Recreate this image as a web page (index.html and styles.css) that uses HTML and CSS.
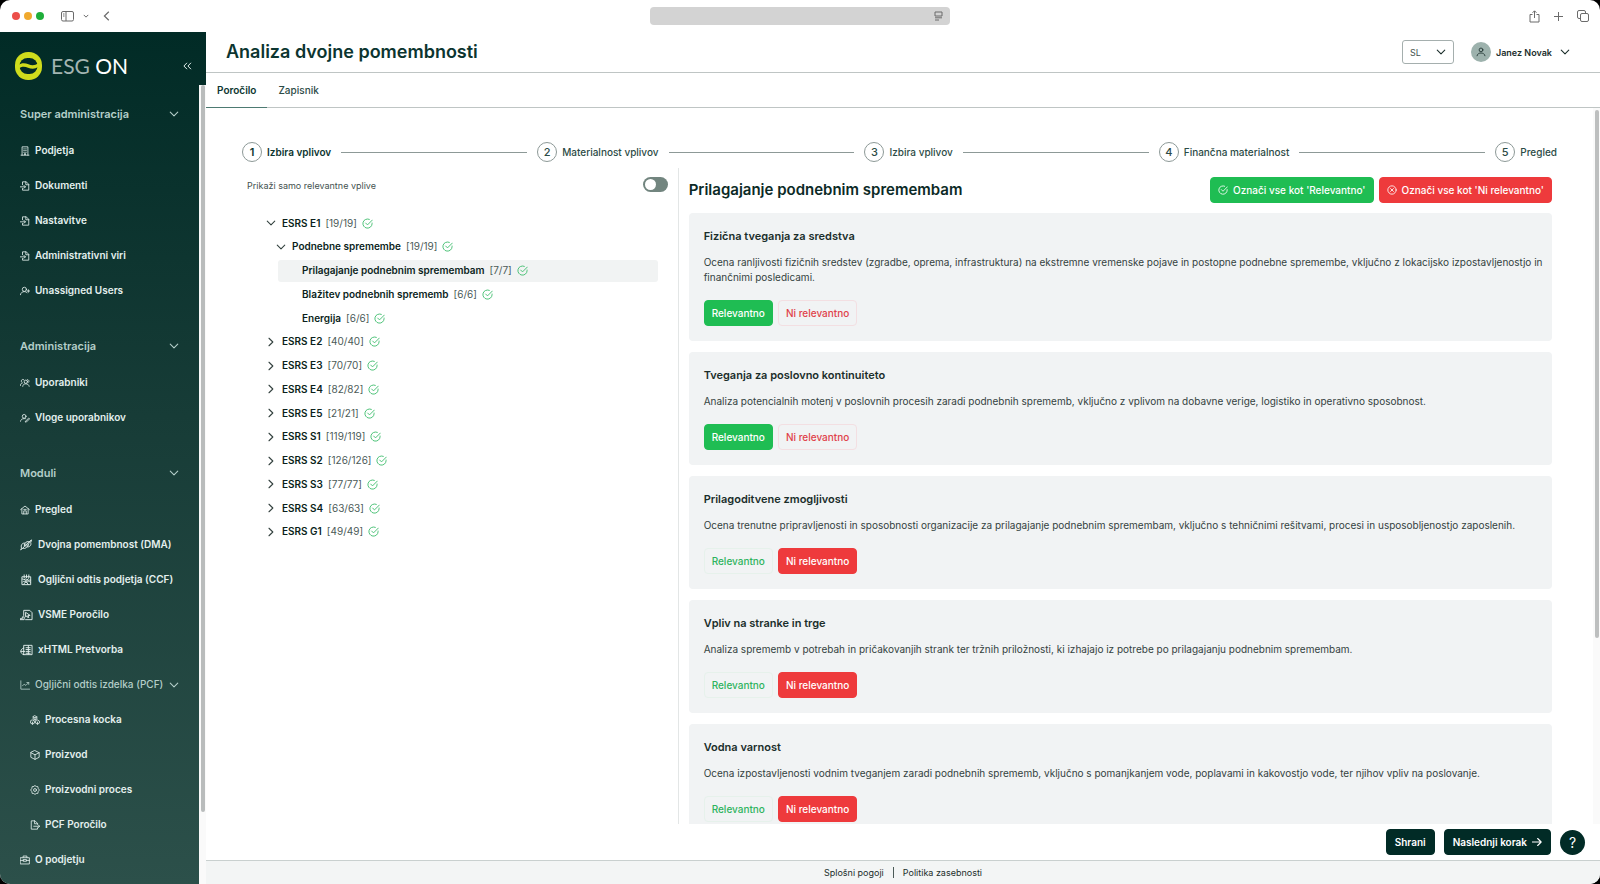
FILE: index.html
```html
<!DOCTYPE html>
<html lang="sl">
<head>
<meta charset="utf-8">
<meta name="viewport" content="width=device-width, initial-scale=1">
<title>Analiza dvojne pomembnosti</title>
<link rel="stylesheet" href="styles.css">
</head>
<body>
<svg class="sprite" aria-hidden="true">
  <symbol id="i-down" viewBox="0 0 12 12"><path d="M1.500 3.800 6 8.300l4.500-4.500"/></symbol>
  <symbol id="i-right" viewBox="0 0 12 12"><path d="M3.600 1.500 8.200 6 3.600 10.500"/></symbol>
  <symbol id="i-check" viewBox="0 0 24 24"><path d="M22 11v1a10 10 0 1 1-6-9.100M22.500 4.500 12 15l-4-4"/></symbol>
  <symbol id="i-cross" viewBox="0 0 24 24"><circle cx="12" cy="12" r="10"/><path d="m8.500 8.500 7 7m0-7-7 7"/></symbol>
  <symbol id="i-building" viewBox="0 0 24 24"><path d="M5 22V2h14v20M2.500 22h19M9 7h1.500M13.500 7H15M9 11h1.500M13.500 11H15M9 15h1.500M13.500 15H15M11 21v-3h2v3"/></symbol>
  <symbol id="i-filein" viewBox="0 0 24 24"><path d="M6 9V2h9l6 6v14H6v-4M14 2v7h7M0 14h13M9.500 10.500 13 14l-3.500 3.500"/></symbol>
  <symbol id="i-userplus" viewBox="0 0 24 24"><circle cx="10.500" cy="8" r="5"/><path d="M1 21c1-5 4.500-7.500 9.500-7.500 3 0 5 1 6.500 3M20 9v6M17 12h6"/></symbol>
  <symbol id="i-users" viewBox="0 0 24 24"><circle cx="14" cy="9" r="4"/><path d="M6.500 20c.5-4.500 3.500-6 7.500-6s7 1.500 8 6M9 4a4 4 0 0 0-4 7M1 18c0-3 1-5 4-6M18 4c3 0 4.500 3 3 6"/></symbol>
  <symbol id="i-useredit" viewBox="0 0 24 24"><circle cx="10" cy="8" r="4.500"/><path d="M1 20c1-4.500 4-6.500 9-6.500h3M13 20l8-8 2 2-7.500 7.500H13z"/></symbol>
  <symbol id="i-home" viewBox="0 0 24 24"><path d="M1.500 11 12 2.500 22.500 11M4.500 9v12.500h15V9M9 21v-7h6v7M9 10.500h6"/></symbol>
  <symbol id="i-scale" viewBox="0 0 28 24"><path d="M3 18C1 12 5 7 11 8c2-3 6-4 9-3l5-4-2 6c2 5-2 10-8 9-3 4-7 4-9 3l-4 3zM11 8c-2 3-2 6 0 8m4 0c3-3 4-6 5-11M6 19c4-5 9-10 17-16M9 12h9"/></symbol>
  <symbol id="i-carbon" viewBox="0 0 28 24"><path d="M5 5h18v17H5zM9 1v6M14 1v6M19 1v6M5 10c4 4 7-3 10 1s5 0 8 1M6 16c4-4 6 4 10 0s5 2 7 1M9 10l9 12M18 9 8 21"/></symbol>
  <symbol id="i-vsme" viewBox="0 0 28 24"><path d="M8 13V2h13l5 5v15H12M12 7v9l3-2 2 4 2-1-2-4h4zM1 22h8v-6H5v4H1z"/></symbol>
  <symbol id="i-xhtml" viewBox="0 0 28 24"><path d="M8 7V2h18v20H8M8 8c-8 1-9 12 0 14M13 7h9M13 11h9M13 15h9M13 19h9M18 3v18M8 8v14M2 15h8"/></symbol>
  <symbol id="i-chart" viewBox="0 0 24 24"><path d="M2 2v20h21M6 14l4-4 4 3 7-7M16.500 6H21v4.500"/></symbol>
  <symbol id="i-cubes" viewBox="0 0 24 24"><path d="m12 2 4.500 2.500v5L12 12 7.500 9.500v-5zM6 12l4.500 2.500v5L6 22l-4.500-2.500v-5zM18 12l4.500 2.500v5L18 22l-4.500-2.500v-5zM12 7v5M6 17v5M18 17v5M7.500 4.500 12 7l4.500-2.500"/></symbol>
  <symbol id="i-cube" viewBox="0 0 24 24"><path d="m12 1.500 10 5v11l-10 5-10-5v-11zM2 6.500l10 5 10-5M12 11.500v11"/></symbol>
  <symbol id="i-gear" viewBox="0 0 24 24"><path d="m12 1.500 3 2 4 .5.500 4 3 4-3 4-.5 4-4 .5-3 2-3-2-4-.5-.5-4-3-4 3-4 .5-4 4-.5z"/><circle cx="12" cy="12" r="3.500"/></symbol>
  <symbol id="i-fileout" viewBox="0 0 24 24"><path d="M18 10V8l-6-6H3v20h15v-3M11 2v7h7M9 15h14M19.500 11.500 23 15l-3.500 3.500"/></symbol>
  <symbol id="i-case" viewBox="0 0 24 24"><path d="M1.500 6.500h21v15h-21zM7.500 6V2.500h9V6M1.500 13h7m7 0h7M8.500 11h7v4h-7z"/></symbol>
  <symbol id="i-user" viewBox="0 0 24 24"><circle cx="12" cy="7" r="4.500"/><path d="M2.500 21c1-5 5-6.500 9.500-6.500s8.500 1.500 9.500 6.500"/></symbol>
</svg>

<div class="window">
  <div class="browser">
    <div class="browser-left">
      <span class="light red"></span><span class="light amber"></span><span class="light green"></span>
      <button class="chrome-btn panel-btn" aria-label="Stranska vrstica"><svg width="13" height="11" viewBox="0 0 13 11"><rect x=".5" y=".5" width="12" height="9.500" rx="1.500"/><path d="M5 .5V10M2 3h1.500M2 5h1.500"/></svg></button>
      <button class="chrome-btn caret-btn" aria-label="Več"><svg width="6" height="6" viewBox="0 0 12 12"><path stroke-width="2" d="M1.500 3.800 6 8.300l4.500-4.500"/></svg></button>
      <button class="chrome-btn" aria-label="Nazaj"><svg width="7" height="10" viewBox="0 0 7 10"><path stroke-width="1.200" d="M5.800.8 1.400 5l4.400 4.200"/></svg></button>
    </div>
    <div class="address">
      <input class="address-input" type="text" aria-label="Naslov" readonly>
      <svg class="reader" width="9" height="10" viewBox="0 0 9 10"><path d="M1 1h7v4H1zM1 6.800h7M1 9h4"/></svg>
    </div>
    <div class="browser-right">
      <button class="chrome-btn" aria-label="Deli"><svg width="11" height="13" viewBox="0 0 11 13"><path d="M3.500 4.500H1v7.500h9V4.500H7.500M5.500 8V1M3.500 2.800 5.500.8l2 2"/></svg></button>
      <button class="chrome-btn" aria-label="Nov zavihek"><svg width="9" height="9" viewBox="0 0 9 9"><path d="M4.500 0v9M0 4.500h9"/></svg></button>
      <button class="chrome-btn" aria-label="Zavihki"><svg width="12" height="12" viewBox="0 0 12 12"><rect x="3.500" y="3.500" width="8" height="8" rx="1.500"/><path d="M3.500 8.500H2A1.500 1.500 0 0 1 .5 7V2A1.500 1.500 0 0 1 2 .5h5A1.500 1.500 0 0 1 8.500 2v1.500"/></svg></button>
    </div>
  </div>

  <div class="app">
    <aside class="sidebar">
      <div class="brand">
        <svg class="logo" width="27" height="28" viewBox="0 0 27 28"><rect width="27" height="28" rx="13" fill="#cfdc1c"/><rect x="4.500" y="6" width="18" height="16" rx="8" fill="#012b26"/><path fill="#cfdc1c" d="M3 13.500c3.500-3 7-2.500 10.500-1.200 3.500 1.300 6.500 1.300 10-1.300v3.500c-3.500 3-7 2.500-10.500 1.200-3.500-1.300-6.500-1.300-10 1.300z"/></svg>
        <span class="brand-name"><span class="brand-soft">ESG</span> ON</span>
        <button class="collapse" aria-label="Skrči meni"><svg width="9" height="8" viewBox="0 0 9 8"><path d="M4 .8.900 4 4 7.200M8 .8 4.900 4 8 7.200"/></svg></button>
      </div>
      <div class="nav-scroll">
        <nav class="nav">
          <section class="nav-group">
            <button class="nav-head">Super administracija<svg class="ico chev"><use href="#i-down"/></svg></button>
            <a class="nav-item" href="#"><svg class="ico"><use href="#i-building"/></svg>Podjetja</a>
            <a class="nav-item" href="#"><svg class="ico"><use href="#i-filein"/></svg>Dokumenti</a>
            <a class="nav-item" href="#"><svg class="ico"><use href="#i-filein"/></svg>Nastavitve</a>
            <a class="nav-item" href="#"><svg class="ico"><use href="#i-filein"/></svg>Administrativni viri</a>
            <a class="nav-item" href="#"><svg class="ico"><use href="#i-userplus"/></svg>Unassigned Users</a>
          </section>
          <section class="nav-group">
            <button class="nav-head">Administracija<svg class="ico chev"><use href="#i-down"/></svg></button>
            <a class="nav-item" href="#"><svg class="ico"><use href="#i-users"/></svg>Uporabniki</a>
            <a class="nav-item" href="#"><svg class="ico"><use href="#i-useredit"/></svg>Vloge uporabnikov</a>
          </section>
          <section class="nav-group">
            <button class="nav-head">Moduli<svg class="ico chev"><use href="#i-down"/></svg></button>
            <a class="nav-item" href="#"><svg class="ico"><use href="#i-home"/></svg>Pregled</a>
            <a class="nav-item" href="#"><svg class="ico wide"><use href="#i-scale"/></svg>Dvojna pomembnost (DMA)</a>
            <a class="nav-item" href="#"><svg class="ico wide"><use href="#i-carbon"/></svg>Ogljični odtis podjetja (CCF)</a>
            <a class="nav-item" href="#"><svg class="ico wide"><use href="#i-vsme"/></svg>VSME Poročilo</a>
            <a class="nav-item" href="#"><svg class="ico wide"><use href="#i-xhtml"/></svg>xHTML Pretvorba</a>
            <button class="nav-item nav-parent"><svg class="ico"><use href="#i-chart"/></svg>Ogljični odtis izdelka (PCF)<svg class="ico chev"><use href="#i-down"/></svg></button>
            <a class="nav-item sub" href="#"><svg class="ico"><use href="#i-cubes"/></svg>Procesna kocka</a>
            <a class="nav-item sub" href="#"><svg class="ico"><use href="#i-cube"/></svg>Proizvod</a>
            <a class="nav-item sub" href="#"><svg class="ico"><use href="#i-gear"/></svg>Proizvodni proces</a>
            <a class="nav-item sub" href="#"><svg class="ico"><use href="#i-fileout"/></svg>PCF Poročilo</a>
            <a class="nav-item" href="#"><svg class="ico"><use href="#i-case"/></svg>O podjetju</a>
          </section>
        </nav>
        <div class="nav-track"><div class="nav-thumb"></div></div>
      </div>
    </aside>

    <div class="main">
      <header class="header">
        <h1 class="page-title">Analiza dvojne pomembnosti</h1>
        <div class="lang">
          <select class="lang-select" aria-label="Jezik"><option>SL</option></select>
          <svg class="ico lang-chev"><use href="#i-down"/></svg>
        </div>
        <button class="user"><span class="avatar"><svg class="ico"><use href="#i-user"/></svg></span>Janez Novak<svg class="ico chev"><use href="#i-down"/></svg></button>
      </header>
      <nav class="tabs">
        <a class="tab active" href="#">Poročilo</a>
        <a class="tab" href="#">Zapisnik</a>
      </nav>

      <div class="body">
        <div class="content">
          <ol class="stepper">
            <li class="step current"><span class="num">1</span>Izbira vplivov</li>
            <li class="step"><span class="num">2</span>Materialnost vplivov</li>
            <li class="step"><span class="num">3</span>Izbira vplivov</li>
            <li class="step"><span class="num">4</span>Finančna materialnost</li>
            <li class="step"><span class="num">5</span>Pregled</li>
          </ol>
          <div class="split">
            <div class="left">
              <div class="filter">
                <label for="only-relevant">Prikaži samo relevantne vplive</label>
                <input class="switch" type="checkbox" id="only-relevant">
              </div>
              <ul class="tree">
                <li class="row"><button class="twist" aria-label="Skrči"><svg class="ico"><use href="#i-down"/></svg></button><b>ESRS E1</b><span class="count">[19/19]</span><svg class="ico ok"><use href="#i-check"/></svg></li>
                <li class="row l2"><button class="twist" aria-label="Skrči"><svg class="ico"><use href="#i-down"/></svg></button><b>Podnebne spremembe</b><span class="count">[19/19]</span><svg class="ico ok"><use href="#i-check"/></svg></li>
                <li class="row l3 selected"><b>Prilagajanje podnebnim spremembam</b><span class="count">[7/7]</span><svg class="ico ok"><use href="#i-check"/></svg></li>
                <li class="row l3"><b>Blažitev podnebnih sprememb</b><span class="count">[6/6]</span><svg class="ico ok"><use href="#i-check"/></svg></li>
                <li class="row l3"><b>Energija</b><span class="count">[6/6]</span><svg class="ico ok"><use href="#i-check"/></svg></li>
                <li class="row"><button class="twist" aria-label="Razširi"><svg class="ico"><use href="#i-right"/></svg></button><b>ESRS E2</b><span class="count">[40/40]</span><svg class="ico ok"><use href="#i-check"/></svg></li>
                <li class="row"><button class="twist" aria-label="Razširi"><svg class="ico"><use href="#i-right"/></svg></button><b>ESRS E3</b><span class="count">[70/70]</span><svg class="ico ok"><use href="#i-check"/></svg></li>
                <li class="row"><button class="twist" aria-label="Razširi"><svg class="ico"><use href="#i-right"/></svg></button><b>ESRS E4</b><span class="count">[82/82]</span><svg class="ico ok"><use href="#i-check"/></svg></li>
                <li class="row"><button class="twist" aria-label="Razširi"><svg class="ico"><use href="#i-right"/></svg></button><b>ESRS E5</b><span class="count">[21/21]</span><svg class="ico ok"><use href="#i-check"/></svg></li>
                <li class="row"><button class="twist" aria-label="Razširi"><svg class="ico"><use href="#i-right"/></svg></button><b>ESRS S1</b><span class="count">[119/119]</span><svg class="ico ok"><use href="#i-check"/></svg></li>
                <li class="row"><button class="twist" aria-label="Razširi"><svg class="ico"><use href="#i-right"/></svg></button><b>ESRS S2</b><span class="count">[126/126]</span><svg class="ico ok"><use href="#i-check"/></svg></li>
                <li class="row"><button class="twist" aria-label="Razširi"><svg class="ico"><use href="#i-right"/></svg></button><b>ESRS S3</b><span class="count">[77/77]</span><svg class="ico ok"><use href="#i-check"/></svg></li>
                <li class="row"><button class="twist" aria-label="Razširi"><svg class="ico"><use href="#i-right"/></svg></button><b>ESRS S4</b><span class="count">[63/63]</span><svg class="ico ok"><use href="#i-check"/></svg></li>
                <li class="row"><button class="twist" aria-label="Razširi"><svg class="ico"><use href="#i-right"/></svg></button><b>ESRS G1</b><span class="count">[49/49]</span><svg class="ico ok"><use href="#i-check"/></svg></li>
              </ul>
            </div>

            <div class="right">
              <div class="topic-head">
                <h2 class="topic">Prilagajanje podnebnim spremembam</h2>
                <button class="btn yes on"><svg class="ico"><use href="#i-check"/></svg>Označi vse kot 'Relevantno'</button>
                <button class="btn no on"><svg class="ico"><use href="#i-cross"/></svg>Označi vse kot 'Ni relevantno'</button>
              </div>
              <div class="cards">
                <article class="card">
                  <h3>Fizična tveganja za sredstva</h3>
                  <p>Ocena ranljivosti fizičnih sredstev (zgradbe, oprema, infrastruktura) na ekstremne vremenske pojave in postopne podnebne spremembe, vključno z lokacijsko izpostavljenostjo in finančnimi posledicami.</p>
                  <div class="choice"><button class="btn yes on">Relevantno</button><button class="btn no">Ni relevantno</button></div>
                </article>
                <article class="card">
                  <h3>Tveganja za poslovno kontinuiteto</h3>
                  <p>Analiza potencialnih motenj v poslovnih procesih zaradi podnebnih sprememb, vključno z vplivom na dobavne verige, logistiko in operativno sposobnost.</p>
                  <div class="choice"><button class="btn yes on">Relevantno</button><button class="btn no">Ni relevantno</button></div>
                </article>
                <article class="card">
                  <h3>Prilagoditvene zmogljivosti</h3>
                  <p>Ocena trenutne pripravljenosti in sposobnosti organizacije za prilagajanje podnebnim spremembam, vključno s tehničnimi rešitvami, procesi in usposobljenostjo zaposlenih.</p>
                  <div class="choice"><button class="btn yes">Relevantno</button><button class="btn no on">Ni relevantno</button></div>
                </article>
                <article class="card">
                  <h3>Vpliv na stranke in trge</h3>
                  <p>Analiza sprememb v potrebah in pričakovanjih strank ter tržnih priložnosti, ki izhajajo iz potrebe po prilagajanju podnebnim spremembam.</p>
                  <div class="choice"><button class="btn yes">Relevantno</button><button class="btn no on">Ni relevantno</button></div>
                </article>
                <article class="card">
                  <h3>Vodna varnost</h3>
                  <p>Ocena izpostavljenosti vodnim tveganjem zaradi podnebnih sprememb, vključno s pomanjkanjem vode, poplavami in kakovostjo vode, ter njihov vpliv na poslovanje.</p>
                  <div class="choice"><button class="btn yes">Relevantno</button><button class="btn no on">Ni relevantno</button></div>
                </article>
              </div>
            </div>
          </div>
        </div>
        <div class="page-track"><div class="page-thumb"></div></div>
      </div>

      <div class="actions">
        <button class="btn dark">Shrani</button>
        <button class="btn dark">Naslednji korak<svg class="ico" viewBox="0 0 12 12"><path d="M.5 6h10.500M6.800 1.800 11 6l-4.200 4.200"/></svg></button>
        <button class="help" aria-label="Pomoč">?</button>
      </div>
      <footer class="footer">
        <a href="#">Splošni pogoji</a><span class="bar"></span><a href="#">Politika zasebnosti</a>
      </footer>
    </div>
  </div>
</div>
</body>
</html>
```
FILE: styles.css
```css
* { box-sizing: border-box; }

body {
  margin: 0;
  background: #000;
  color: #1b2e2b;
  font: 10px/15px Inter, "Liberation Sans", sans-serif;
}

button, input, select { font: inherit; color: inherit; margin: 0; }
button { border: 0; padding: 0; background: none; cursor: pointer; }
a { color: inherit; text-decoration: none; }
h1, h2, h3, p, ol, ul { margin: 0; padding: 0; list-style: none; }
svg { display: block; flex: none; fill: none; stroke: currentColor; }

.sprite { display: none; }
.ico { width: 10px; height: 10px; stroke-width: 2; stroke-linecap: round; stroke-linejoin: round; }
.chev, .twist .ico, .lang-chev, .btn.dark .ico { stroke-width: 1.3; }

.window {
  display: flex;
  flex-direction: column;
  height: 100vh;
  overflow: hidden;
  border-radius: 10px;
  background: #fff;
}

/* browser bar */
.browser {
  display: grid;
  grid-template-columns: 1fr 300px 1fr;
  align-items: center;
  flex: none;
  height: 32px;
  color: #6b6b6b;
}
.browser-left { display: flex; align-items: center; padding-left: 12px; gap: 4px; }
.light { width: 8px; height: 8px; border-radius: 50%; }
.red { background: #ec4f4a; }
.amber { background: #f0a92e; }
.green { background: #1fae3a; }
.panel-btn { margin-left: 13px; }
.caret-btn { margin: 0 10px 0 5px; }
.address { display: flex; position: relative; }
.address-input {
  width: 100%;
  height: 18px;
  border: 0;
  border-radius: 4px;
  background: #d3d3d3;
}
.reader { position: absolute; right: 7px; top: 4px; }
.browser-right { display: flex; justify-content: flex-end; align-items: center; gap: 14px; padding-right: 11px; }

.app { display: flex; flex: 1; min-height: 0; }

/* sidebar */
.sidebar {
  display: flex;
  flex-direction: column;
  flex: none;
  width: 206px;
  color: #e4f0ee;
  background: linear-gradient(#012b26, #173c37 45%, #2c504a);
}
.brand { display: flex; align-items: center; flex: none; height: 53px; padding: 14px 14px 0 15px; }
.logo { stroke: none; }
.brand-name { margin-left: 9px; font: 400 21px/24px Lato, sans-serif; color: #fff; }
.brand-soft { color: #a3b5b2; }
.collapse { margin-left: auto; }
.nav-scroll { display: flex; flex: 1; min-height: 0; overflow: hidden; }
.nav { display: flex; flex-direction: column; flex: 1; gap: 19px; padding: 10px 20px 0; }
.nav-head {
  display: flex;
  align-items: center;
  justify-content: space-between;
  width: 100%;
  height: 38px;
  font-size: 11px;
  font-weight: 600;
  color: #b4cec9;
}
.nav-item {
  display: flex;
  align-items: center;
  gap: 5px;
  width: 100%;
  height: 35px;
  font-weight: 600;
  white-space: nowrap;
}
.nav-item .wide { width: 13px; height: 12px; }
.nav-parent { font-weight: 500; color: #b4cec9; }
.nav-parent .chev { margin-left: auto; }
.sub { padding-left: 10px; }
.nav-track { flex: none; width: 7px; padding: 0 1px 0 2px; background: #fafafa; }
.nav-thumb { height: 91%; border-radius: 3px; background: #b9bcbc; }

/* header */
.main { display: flex; flex-direction: column; flex: 1; min-width: 0; }
.header {
  display: flex;
  align-items: center;
  flex: none;
  height: 41px;
  padding: 0 30px 0 20px;
  border-bottom: 1px solid #bfc5c4;
}
.page-title { margin-right: auto; font-size: 18px; line-height: 24px; font-weight: 600; color: #0c3530; }
.lang { position: relative; display: flex; align-items: center; }
.lang-select {
  appearance: none;
  width: 52px;
  height: 24px;
  padding: 0 7px;
  border: 1px solid #a5afae;
  border-radius: 3px;
  background: #fff;
  font-size: 9px;
  color: #44524f;
}
.lang-chev { position: absolute; right: 8px; pointer-events: none; }
.user { display: flex; align-items: center; margin-left: 17px; font-size: 9px; font-weight: 600; }
.avatar {
  display: grid;
  place-items: center;
  width: 20px;
  height: 20px;
  margin-right: 5px;
  border-radius: 50%;
  background: #9db2ad;
}
.user .chev { margin-left: 8px; }

.tabs { display: flex; flex: none; height: 35px; border-bottom: 1px solid #bfc5c4; }
.tab { padding: 10px 11px; height: 35px; font-weight: 500; color: #2c4b46; }
.tab.active { font-weight: 600; color: #0c3530; border-bottom: 1px solid #4d7a72; }

/* content */
.body { display: flex; flex: 1; min-height: 0; }
.content { display: flex; flex-direction: column; flex: 1; min-width: 0; padding: 34px 36px 0 36px; }
.page-track { flex: none; width: 7px; padding: 2px 1px 0 2px; background: #fafafa; }
.page-thumb { height: 74%; border-radius: 2px; background: #bdbfbf; }

.stepper { display: flex; align-items: center; }
.step { display: flex; align-items: center; flex: 1 1 auto; gap: 5px; font-weight: 500; white-space: nowrap; color: #2c4b46; }
.step:last-child { flex: none; }
.step:not(:last-child)::after { content: ""; flex: 1; height: 1px; margin: 0 10px 0 5px; background: #8d9997; }
.step.current { font-weight: 600; color: #0c3530; }
.num {
  display: grid;
  place-items: center;
  width: 20px;
  height: 20px;
  border: 1px solid #8d9997;
  border-radius: 50%;
  font-size: 11px;
}

.split {
  display: grid;
  grid-template-columns: minmax(0, 1fr) minmax(0, 2fr);
  flex: 1;
  min-height: 0;
  margin: 6px 5px 0 0;
}
.left { padding: 9px 10px 0 5px; border-right: 1px solid #e3e6e6; }
.filter { display: flex; align-items: flex-end; justify-content: space-between; color: #44524f; font-size: 9px; line-height: 13px; }
.switch {
  appearance: none;
  width: 25px;
  height: 15px;
  padding: 2px;
  border-radius: 8px;
  background: #72857f;
}
.switch::before { content: ""; display: block; width: 11px; height: 11px; border-radius: 50%; background: #fff; }

.tree {
  display: flex;
  flex-direction: column;
  justify-content: space-between;
  min-height: 331px;
  margin: 20px 10px 0 11px;
}
.row { display: flex; align-items: center; gap: 5px; height: 22px; padding-left: 8px; border-radius: 3px; }
.row b { font-weight: 600; color: #0b1f1c; }
.l2 { margin-left: 10px; }
.l3 { margin-left: 20px; padding-left: 24px; }
.selected { background: #f1f3f3; }
.twist { width: 11px; color: #34423f; }
.count { color: #4b5a57; }
.row .ok { width: 11px; height: 11px; color: #3fbd6d; }

.right { display: flex; flex-direction: column; min-height: 0; padding-left: 10px; }
.topic-head { display: flex; align-items: center; gap: 5px; flex: none; padding: 9px 0 10px; }
.topic { margin-right: auto; font-size: 15px; line-height: 20px; font-weight: 600; color: #0c2a26; }
.cards { display: flex; flex-direction: column; gap: 11px; flex: 1; min-height: 0; overflow: hidden; }
.card { flex: none; padding: 15px 5px 15px 15px; border-radius: 4px; background: #f1f3f4; }
.card h3 { margin-bottom: 11px; font-size: 11px; line-height: 16px; font-weight: 600; }
.card p { margin-bottom: 15px; color: #34423f; }
.choice { display: flex; gap: 5px; }

.btn {
  display: flex;
  align-items: center;
  gap: 5px;
  height: 26px;
  padding: 0 7px;
  border: 1px solid;
  border-radius: 4px;
  font-weight: 500;
  white-space: nowrap;
}
.yes { border-color: #e6f1eb; color: #2fb35e; }
.no { border-color: #f3dfe2; color: #e0424a; }
.yes.on { border-color: #1fbd53; background: #1fbd53; color: #fff; }
.no.on { border-color: #ee3a3c; background: #ee3a3c; color: #fff; }
.dark { padding: 0 8px; border-color: #012b26; background: #012b26; color: #fff; font-weight: 600; }

.actions { display: flex; align-items: center; justify-content: flex-end; gap: 9px; flex: none; height: 36px; padding-right: 15px; }
.help { width: 25px; height: 25px; border-radius: 50%; background: #012b26; color: #fff; font-size: 14px; }

.footer {
  display: flex;
  align-items: center;
  justify-content: center;
  gap: 9px;
  flex: none;
  height: 24px;
  border-top: 1px solid #c9d0cf;
  background: #f3f5f5;
  font-size: 9px;
}
.bar { width: 1px; height: 11px; background: #4b5a57; }
```
